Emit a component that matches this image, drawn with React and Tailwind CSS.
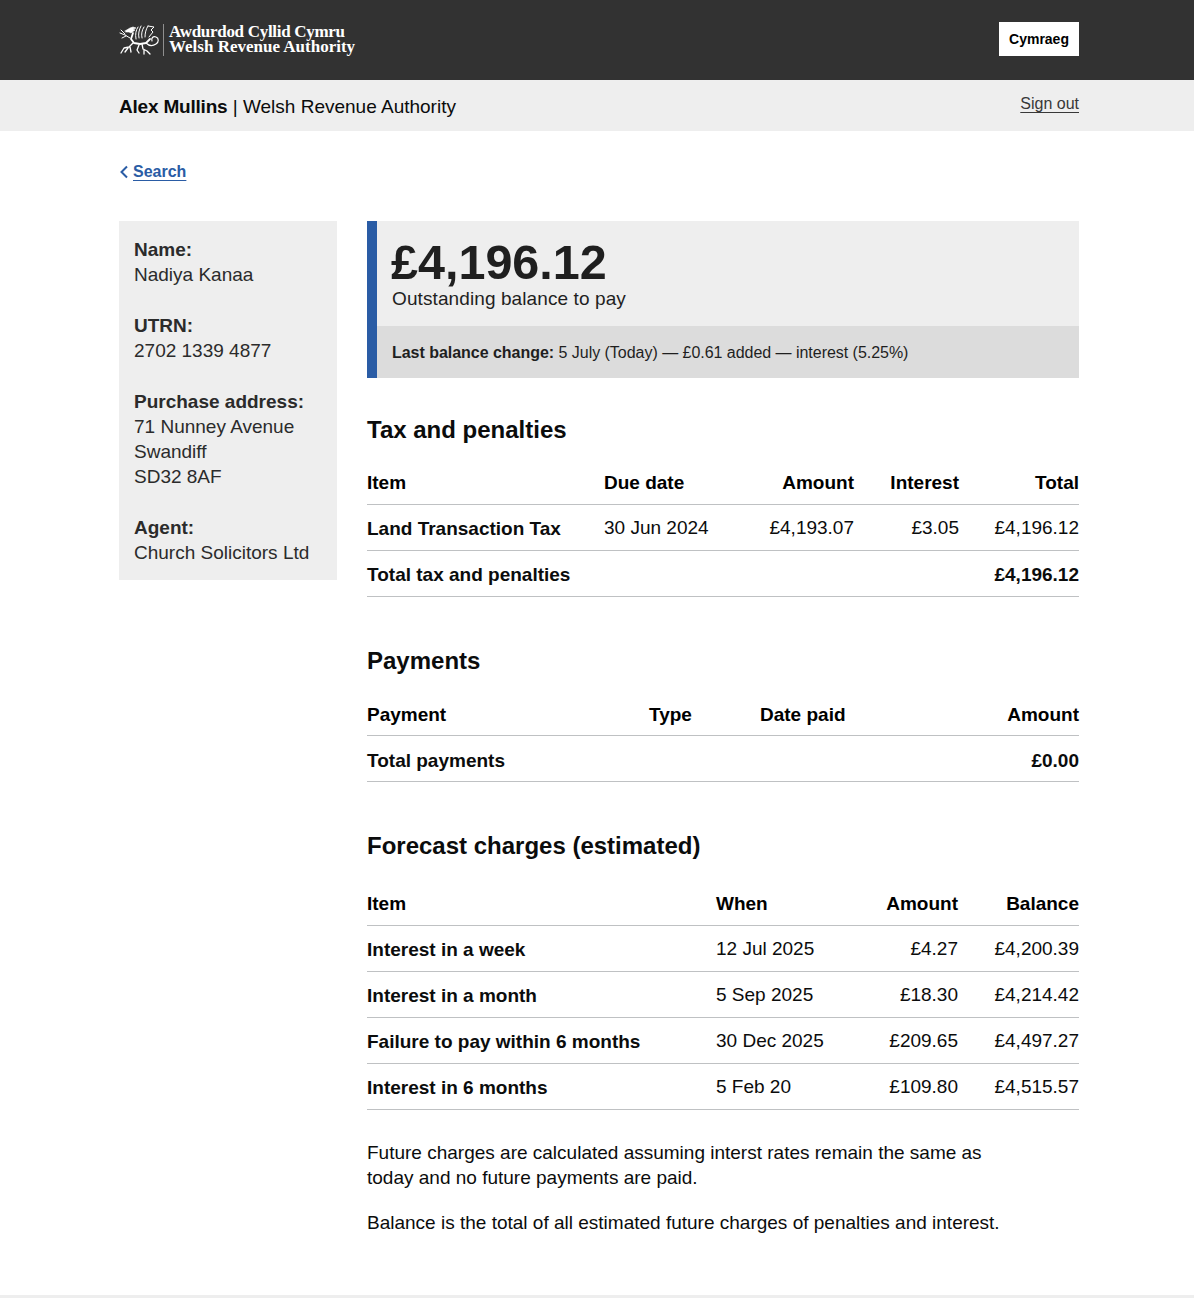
import React from "react";

function Dragon() {
  return (
    <svg width="41" height="31" viewBox="0 0 41 31" fill="none" stroke="#fff" strokeLinecap="round" strokeLinejoin="round">
      {/* foreleg and claws */}
      <path d="M1 8l5 2 5 3M3 13l4-2M2 5l4 4" strokeWidth="1" />
      {/* head */}
      <path d="M6 6l5-3 3-1 3 1-3 1 2 1-4 3-2-1-3 0z" fill="#fff" strokeWidth="0.6" />
      {/* body */}
      <path d="M14 8l-2 6 3 4 6 1 6-1 4-4" strokeWidth="1.8" />
      {/* wings */}
      <path d="M19 2c-2 3-3 7-2 12M22 1c-2 4-3 8-2 12M25 2c-2 3-3 7-2 11M29 1c-2 3-3 7-3 11M29 1l6 1-3 3 2 2-4 5" strokeWidth="1" />
      {/* front leg */}
      <path d="M14 18l-4 4-5 1-3 5M9 23l-3 4M11 22l1 5" strokeWidth="1.3" />
      {/* back legs */}
      <path d="M23 19l1 5 4 2 3 3M25 25l0 4M20 20l-2 5 2 3" strokeWidth="1.3" />
      {/* tail loop */}
      <path d="M27 18c3 3 7 3 10 1 3-2 3-6 0-7-3-1-5 1-4 4" strokeWidth="1.2" />
    </svg>
  );
}

function Cell({ children, right, bold, head }) {
  return (
    <td className={`h-[46px] border-b border-[#bfc1c3] p-0 align-middle ${head ? "pt-[4px]" : bold ? "pt-[3px]" : "pt-[1px]"} ${right ? "text-right" : "text-left"} ${bold || head ? "font-bold" : ""} ${head ? "text-black" : ""}`}>
      {children}
    </td>
  );
}

function Section({ title, widths, right, rows, boldRows = [], className = "", tableClass = "mt-[13px]" }) {
  return (
    <section className={className}>
      <h2 className="text-[24px] leading-[30px] font-bold text-[#0b0c0c]">{title}</h2>
      <table className={`${tableClass} w-full table-fixed border-collapse text-[19px] leading-[25px] text-[#0b0c0c]`}>
        <colgroup>
          {widths.map((w, i) => (
            <col key={i} style={{ width: w }} />
          ))}
        </colgroup>
        <tbody>
          {rows.map((row, r) => (
            <tr key={r}>
              {row.map((c, i) => (
                <Cell key={i} right={right.includes(i)} head={r === 0} bold={i === 0 || boldRows.includes(r)}>
                  {c}
                </Cell>
              ))}
            </tr>
          ))}
        </tbody>
      </table>
    </section>
  );
}

export default function App() {
  return (
    <div className="bg-white font-['Liberation_Sans',Arial,sans-serif] text-[#0b0c0c]">
      <header className="h-[80px] bg-[#323232]">
        <div className="ml-[119px] flex h-full w-[960px] items-center justify-between">
          <div className="flex items-center">
            <Dragon />
            <div className="mx-[3px] h-[32px] w-px bg-[#8f8f8f]" />
            <div className="ml-[2px] pb-[2px] font-['Liberation_Serif',serif] text-[17px] leading-[15px] font-bold text-white">
              <div className="tracking-[-0.3px]">Awdurdod Cyllid Cymru</div>
              <div>Welsh Revenue Authority</div>
            </div>
          </div>
          <a className="mb-[2px] flex h-[34px] w-[80px] items-center justify-center bg-white text-[14px] font-bold text-black">Cymraeg</a>
        </div>
      </header>
      <div className="h-[51px] bg-[#eeeeee]">
        <div className="ml-[119px] flex h-full w-[960px] items-center justify-between">
          <div className="pt-[2px] text-[19px] leading-[25px] text-[#0b0c0c]">
            <span className="font-bold tracking-[-0.2px]">Alex Mullins</span> | Welsh Revenue Authority
          </div>
          <a className="mb-[3px] text-[16px] leading-[20px] text-[#383838] underline underline-offset-[3px]">Sign out</a>
        </div>
      </div>
      <main className="ml-[119px] w-[960px]">
        <a className="mt-[31px] flex h-[20px] items-center text-[16px] font-bold text-[#2a5ca5]">
          <svg width="10" height="14" viewBox="0 0 10 14" fill="none" stroke="#2a5ca5" strokeWidth="2" className="mr-[4px]">
            <path d="M8 1.5L2.5 7 8 12.5" />
          </svg>
          <span className="underline underline-offset-[3px]">Search</span>
        </a>
        <div className="mt-[39px] flex items-start gap-[30px]">
          <aside className="flex w-[218px] flex-col gap-[26px] bg-[#eeeeee] px-[15px] pt-[16px] pb-[15px] text-[19px] leading-[25px] text-[#2b2b2b]">
            <div>
              <div className="font-bold">Name:</div>
              <div>Nadiya Kanaa</div>
            </div>
            <div>
              <div className="font-bold">UTRN:</div>
              <div>2702 1339 4877</div>
            </div>
            <div>
              <div className="font-bold">Purchase address:</div>
              <div>71 Nunney Avenue</div>
              <div>Swandiff</div>
              <div>SD32 8AF</div>
            </div>
            <div>
              <div className="font-bold">Agent:</div>
              <div>Church Solicitors Ltd</div>
            </div>
          </aside>
          <div className="w-[712px]">
            <div className="border-l-[10px] border-[#2a5ca5] bg-[#eeeeee]">
              <div className="h-[105px] pr-[15px] pl-[14px] pt-[18px] text-[#1f1f1f]">
                <div className="text-[48.5px] leading-[47px] font-bold">£4,196.12</div>
                <div className="pl-[1px] text-[19px] leading-[25px] tracking-[0.1px]">Outstanding balance to pay</div>
              </div>
              <div className="flex h-[52px] items-center bg-[#dcdcdc] px-[15px] pt-[2px] text-[16px] tracking-[-0.03px] text-[#1f1f1f]">
                <span>
                  <span className="font-bold">Last balance change:</span> 5 July (Today) — £0.61 added — interest (5.25%)
                </span>
              </div>
            </div>
            <Section
              className="mt-[37px]"
              title="Tax and penalties"
              widths={["237px", "150px", "100px", "105px", "120px"]}
              right={[2, 3, 4]}
              boldRows={[2]}
              rows={[
                ["Item", "Due date", "Amount", "Interest", "Total"],
                ["Land Transaction Tax", "30 Jun 2024", "£4,193.07", "£3.05", "£4,196.12"],
                ["Total tax and penalties", "", "", "", "£4,196.12"],
              ]}
            />
            <Section
              className="mt-[49px]"
              tableClass="mt-[14px]"
              title="Payments"
              widths={["282px", "111px", "160px", "159px"]}
              right={[3]}
              boldRows={[1]}
              rows={[
                ["Payment", "Type", "Date paid", "Amount"],
                ["Total payments", "", "", "£0.00"],
              ]}
            />
            <Section
              className="mt-[49px]"
              tableClass="mt-[18px]"
              title="Forecast charges (estimated)"
              widths={["349px", "142px", "100px", "121px"]}
              right={[2, 3]}
              rows={[
                ["Item", "When", "Amount", "Balance"],
                ["Interest in a week", "12 Jul 2025", "£4.27", "£4,200.39"],
                ["Interest in a month", "5 Sep 2025", "£18.30", "£4,214.42"],
                ["Failure to pay within 6 months", "30 Dec 2025", "£209.65", "£4,497.27"],
                ["Interest in 6 months", "5 Feb 20", "£109.80", "£4,515.57"],
              ]}
            />
            <p className="mt-[30px] w-[640px] text-[19px] leading-[25px]">
              Future charges are calculated assuming interst rates remain the same as today and no future payments are paid.
            </p>
            <p className="mt-[20px] text-[19px] leading-[25px]">
              Balance is the total of all estimated future charges of penalties and interest.
            </p>
          </div>
        </div>
      </main>
      <div className="mt-[60px] h-[3px] bg-[#eeeeee]" />
    </div>
  );
}
